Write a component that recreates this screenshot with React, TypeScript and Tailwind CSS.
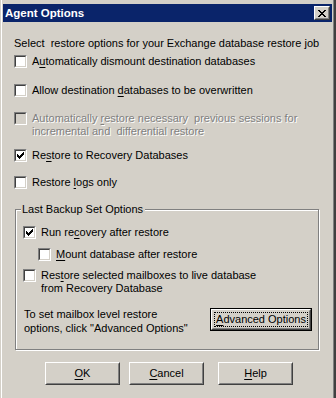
import React from "react";

const FONT = { fontFamily: '"Liberation Sans", Arial, sans-serif' };

function U({ children }: { children: React.ReactNode }) {
  return <span className="underline underline-offset-[2px] decoration-[1px]">{children}</span>;
}

function Check() {
  const rects: [number, number, number][] = [
    [6, 0, 1],
    [5, 1, 2],
    [0, 2, 1],
    [4, 2, 3],
    [0, 3, 2],
    [3, 3, 3],
    [0, 4, 5],
    [1, 5, 3],
    [2, 6, 1],
  ];
  return (
    <svg width="7" height="7" viewBox="0 0 7 7" shapeRendering="crispEdges">
      {rects.map(([x, y, w], i) => (
        <rect key={i} x={x} y={y} width={w} height={1} fill="#000" />
      ))}
    </svg>
  );
}

function Box({ checked, disabled }: { checked?: boolean; disabled?: boolean }) {
  return (
    <div className="w-[13px] h-[13px] shrink-0 border border-t-[#808080] border-l-[#808080] border-b-white border-r-white">
      <div
        className={
          "w-full h-full border border-t-[#404040] border-l-[#404040] border-b-[#d4d0c8] border-r-[#d4d0c8] flex items-center justify-center " +
          (disabled ? "bg-[#d4d0c8]" : "bg-white")
        }
      >
        {checked && <Check />}
      </div>
    </div>
  );
}

function Row({
  checked,
  disabled,
  children,
  className = "",
}: {
  checked?: boolean;
  disabled?: boolean;
  children: React.ReactNode;
  className?: string;
}) {
  return (
    <div className={"flex items-start gap-[5px] " + className}>
      <Box checked={checked} disabled={disabled} />
      <div
        className={
          "leading-[13px] whitespace-pre " +
          (disabled ? "text-[#808080] [text-shadow:1px_1px_0_#ffffff]" : "text-black")
        }
      >
        {children}
      </div>
    </div>
  );
}

function Btn({
  children,
  className = "",
  focused,
}: {
  children: React.ReactNode;
  className?: string;
  focused?: boolean;
}) {
  const inner = (
    <div className="w-full h-full border border-t-white border-l-white border-b-[#404040] border-r-[#404040]">
      <div className="w-full h-full border border-t-[#d4d0c8] border-l-[#d4d0c8] border-b-[#808080] border-r-[#808080] flex items-center justify-center">
        {focused ? (
          <div className="w-[94px] h-[15px] border border-dotted border-black flex items-center justify-center whitespace-nowrap leading-[13px]">
            {children}
          </div>
        ) : (
          <span className="leading-[13px] whitespace-nowrap">{children}</span>
        )}
      </div>
    </div>
  );
  return (
    <div className={"bg-[#d4d0c8] text-black " + className}>
      {focused ? <div className="w-full h-full border border-black">{inner}</div> : inner}
    </div>
  );
}

export default function App() {
  return (
    <div
      className="w-[336px] h-[398px] bg-[#d4d0c8] pl-px border-r-2 border-r-[#404040] text-[11px] text-black"
      style={FONT}
    >
      <div className="h-full border-l border-l-white border-r border-r-[#808080] flex flex-col">
        {/* title bar */}
        <div className="mt-[4px] mx-px h-[18px] bg-[#0a246a] flex items-center pl-[2px] pr-[2px]">
          <span className="text-white font-bold text-[11.5px] leading-[18px]">Agent Options</span>
          <div className="ml-auto w-[16px] h-[14px] bg-[#d4d0c8] border border-t-white border-l-white border-b-[#404040] border-r-[#404040]">
            <div className="w-full h-full border border-t-[#d4d0c8] border-l-[#d4d0c8] border-b-[#808080] border-r-[#808080] flex items-center justify-center">
              <svg width="8" height="7" viewBox="0 0 8 7" shapeRendering="crispEdges">
                {[
                  [0, 0], [6, 0],
                  [1, 1], [5, 1],
                  [2, 2], [4, 2],
                  [3, 3],
                  [2, 4], [4, 4],
                  [1, 5], [5, 5],
                  [0, 6], [6, 6],
                ].map(([x, y], i) => (
                  <rect key={i} x={x} y={y} width={2} height={1} fill="#000" />
                ))}
              </svg>
            </div>
          </div>
        </div>

        {/* body */}
        <div className="pl-[12px] flex flex-col">
          <div className="mt-[15px] leading-[13px] whitespace-pre">
            Select  restore options for your Exchange database restore job
          </div>
          <Row className="mt-[5px]">
            A<U>u</U>tomatically dismount destination databases
          </Row>
          <Row className="mt-[16px]">
            Allow destination <U>d</U>atabases to be overwritten
          </Row>
          <Row className="mt-[15px]" disabled>
            Automatically <U>r</U>estore necessary  previous sessions for
            {"\n"}incremental and  differential restore
          </Row>
          <Row className="mt-[11px]" checked>
            Re<U>s</U>tore to Recovery Databases
          </Row>
          <Row className="mt-[14px]">
            Restore <U>l</U>ogs only
          </Row>

          {/* group box */}
          <div className="relative mt-[20px] ml-px w-[304px] h-[141px] border border-[#808080] shadow-[inset_1px_1px_0_#ffffff,1px_1px_0_#ffffff] pl-[7px] flex flex-col">
            <div className="absolute left-[5px] top-[-7px] bg-[#d4d0c8] pl-[1px] pr-[2px] leading-[13px]">
              Last Backup Set Options
            </div>
            <Row className="mt-[16px]" checked>
              Run re<U>c</U>overy after restore
            </Row>
            <Row className="mt-[9px] ml-[15px]">
              <U>M</U>ount database after restore
            </Row>
            <Row className="mt-[8px]">
              Res<U>t</U>ore selected mailboxes to live database
              {"\n"}from Recovery Database
            </Row>
            <div className="mt-[13px] flex items-start">
              <div className="ml-px mt-[-1px] leading-[14px] whitespace-pre">
                To set mailbox level restore{"\n"}options, click "Advanced Options"
              </div>
              <Btn focused className="ml-auto mr-[6px] w-[102px] h-[23px]">
                <U>A</U>dvanced Options
              </Btn>
            </div>
          </div>

          {/* buttons */}
          <div className="mt-[12px] ml-[31px] flex">
            <Btn className="w-[75px] h-[23px]">
              <U>O</U>K
            </Btn>
            <Btn className="ml-[9px] w-[75px] h-[23px]">
              <U>C</U>ancel
            </Btn>
            <Btn className="ml-[14px] w-[75px] h-[23px]">
              <U>H</U>elp
            </Btn>
          </div>
        </div>
      </div>
    </div>
  );
}
